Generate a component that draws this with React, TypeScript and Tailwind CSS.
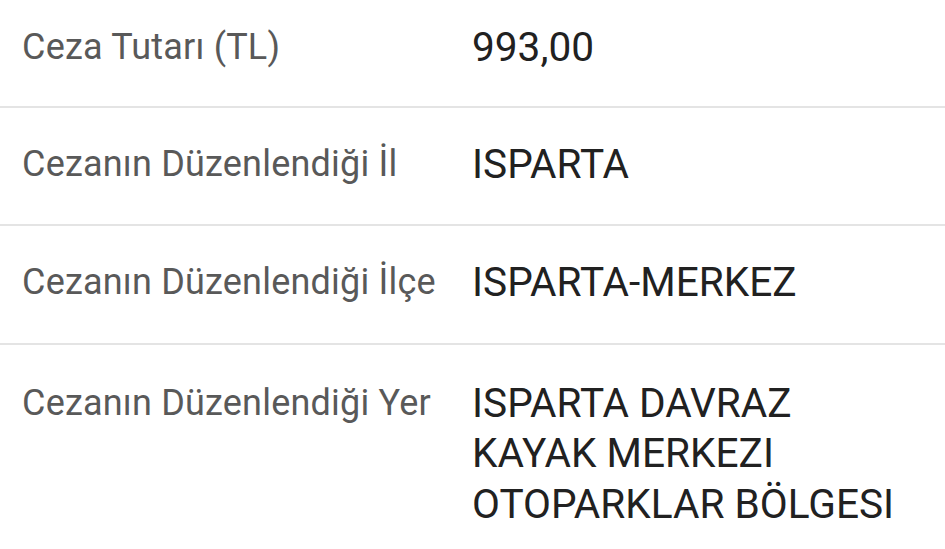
const rows = [
  { label: 'Ceza Tutarı (TL)', value: '993,00', pad: 'pt-[22px] pb-[33px]' },
  { label: 'Cezanın Düzenlendiği İl', value: 'ISPARTA', pad: 'pt-[31px] pb-[35px]' },
  { label: 'Cezanın Düzenlendiği İlçe', value: 'ISPARTA-MERKEZ', pad: 'pt-[31px] pb-[35px]' },
  {
    label: 'Cezanın Düzenlendiği Yer',
    value: 'ISPARTA DAVRAZ KAYAK MERKEZI OTOPARKLAR BÖLGESI',
    pad: 'pt-[33px] pb-[35px]'
  }
]

export default function App() {
  return (
    <div className="w-[945px] h-[549px] overflow-hidden bg-white font-['Roboto',sans-serif]">
      {rows.map((row, i) => (
        <div
          key={row.label}
          className={`flex pl-[22px] ${row.pad} ${i < rows.length - 1 ? 'border-b-2 border-[#e4e4e4]' : ''}`}
        >
          <div className="w-[450px] shrink-0 text-[36px] leading-[50px] tracking-[0.2px] text-[#595959]">
            {row.label}
          </div>
          <div className="w-[435px] text-[40.6px] leading-[50.5px] text-[#212121]">
            {row.value}
          </div>
        </div>
      ))}
    </div>
  )
}
